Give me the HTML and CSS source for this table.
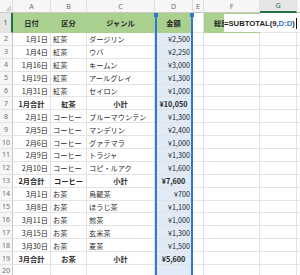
FILE: index.html
```html
<!DOCTYPE html>
<html lang="ja">
<head>
<meta charset="utf-8">
<link rel="stylesheet" href="styles.css">
</head>
<body>
<div class="sheet">
  <div class="grid">
    <div class="hd corner"><span class="tri"></span></div>
    <div class="hd">A</div><div class="hd">B</div><div class="hd">C</div><div class="hd">D</div><div class="hd">E</div><div class="hd">F</div><div class="hd act">G</div><div class="hd"></div>

    <div class="rh act">1</div>
    <div class="c g m b">日付</div><div class="c g m b">区分</div><div class="c g m b">ジャンル</div><div class="c g m b">金額</div><div class="c"></div><div class="c g b f1"><span class="clip">総計</span></div><div class="c"></div><div class="c"></div>

    <div class="rh">2</div><div class="c r">1月1日</div><div class="c">紅茶</div><div class="c">ダージリン</div><div class="c d r">¥2,500</div><div class="c"></div><div class="c"></div><div class="c"></div><div class="c"></div>
    <div class="rh">3</div><div class="c r">1月4日</div><div class="c">紅茶</div><div class="c">ウバ</div><div class="c d r">¥2,250</div><div class="c"></div><div class="c"></div><div class="c"></div><div class="c"></div>
    <div class="rh">4</div><div class="c r">1月16日</div><div class="c">紅茶</div><div class="c">キームン</div><div class="c d r">¥3,000</div><div class="c"></div><div class="c"></div><div class="c"></div><div class="c"></div>
    <div class="rh">5</div><div class="c r">1月19日</div><div class="c">紅茶</div><div class="c">アールグレイ</div><div class="c d r">¥1,300</div><div class="c"></div><div class="c"></div><div class="c"></div><div class="c"></div>
    <div class="rh">6</div><div class="c r">1月31日</div><div class="c">紅茶</div><div class="c">セイロン</div><div class="c d r">¥1,000</div><div class="c"></div><div class="c"></div><div class="c"></div><div class="c"></div>
    <div class="rh">7</div><div class="c m b">1月合計</div><div class="c m b">紅茶</div><div class="c m b">小計</div><div class="c d m b">¥10,050</div><div class="c"></div><div class="c"></div><div class="c"></div><div class="c"></div>
    <div class="rh">8</div><div class="c r">2月1日</div><div class="c">コーヒー</div><div class="c">ブルーマウンテン</div><div class="c d r">¥1,300</div><div class="c"></div><div class="c"></div><div class="c"></div><div class="c"></div>
    <div class="rh">9</div><div class="c r">2月5日</div><div class="c">コーヒー</div><div class="c">マンデリン</div><div class="c d r">¥2,400</div><div class="c"></div><div class="c"></div><div class="c"></div><div class="c"></div>
    <div class="rh">10</div><div class="c r">2月6日</div><div class="c">コーヒー</div><div class="c">グァテマラ</div><div class="c d r">¥1,000</div><div class="c"></div><div class="c"></div><div class="c"></div><div class="c"></div>
    <div class="rh">11</div><div class="c r">2月9日</div><div class="c">コーヒー</div><div class="c">トラジャ</div><div class="c d r">¥1,300</div><div class="c"></div><div class="c"></div><div class="c"></div><div class="c"></div>
    <div class="rh">12</div><div class="c r">2月10日</div><div class="c">コーヒー</div><div class="c">コピ・ルアク</div><div class="c d r">¥1,600</div><div class="c"></div><div class="c"></div><div class="c"></div><div class="c"></div>
    <div class="rh">13</div><div class="c m b">2月合計</div><div class="c m b">コーヒー</div><div class="c m b">小計</div><div class="c d m b">¥7,600</div><div class="c"></div><div class="c"></div><div class="c"></div><div class="c"></div>
    <div class="rh">14</div><div class="c r">3月1日</div><div class="c">お茶</div><div class="c">烏龍茶</div><div class="c d r">¥700</div><div class="c"></div><div class="c"></div><div class="c"></div><div class="c"></div>
    <div class="rh">15</div><div class="c r">3月8日</div><div class="c">お茶</div><div class="c">ほうじ茶</div><div class="c d r">¥1,100</div><div class="c"></div><div class="c"></div><div class="c"></div><div class="c"></div>
    <div class="rh">16</div><div class="c r">3月11日</div><div class="c">お茶</div><div class="c">煎茶</div><div class="c d r">¥1,000</div><div class="c"></div><div class="c"></div><div class="c"></div><div class="c"></div>
    <div class="rh">17</div><div class="c r">3月15日</div><div class="c">お茶</div><div class="c">玄米茶</div><div class="c d r">¥1,300</div><div class="c"></div><div class="c"></div><div class="c"></div><div class="c"></div>
    <div class="rh">18</div><div class="c r">3月30日</div><div class="c">お茶</div><div class="c">麦茶</div><div class="c d r">¥1,500</div><div class="c"></div><div class="c"></div><div class="c"></div><div class="c"></div>
    <div class="rh">19</div><div class="c m b">3月合計</div><div class="c m b">お茶</div><div class="c m b">小計</div><div class="c d m b">¥5,600</div><div class="c"></div><div class="c"></div><div class="c"></div><div class="c"></div>
    <div class="rh">20</div><div class="c"></div><div class="c"></div><div class="c"></div><div class="c d"></div><div class="c"></div><div class="c"></div><div class="c"></div><div class="c"></div>
  </div>
  <div class="refbox"><span class="hdl hl"></span><span class="hdl hr"></span></div>
  <div class="editor">=SUBTOTAL(9,<span class="ref">D:D</span>)<span class="caret"></span></div>
</div>
</body>
</html>
```
FILE: styles.css
```css
* { box-sizing: border-box; margin: 0; padding: 0; }
body {
  margin: 0;
  background: #fff;
  font-family: "Noto Sans CJK JP", "Noto Sans", sans-serif;
  color: #262626;
  overflow: hidden;
}
.sheet {
  position: relative;
  width: 300px;
  height: 275px;
  overflow: hidden;
}
.grid {
  display: grid;
  grid-template-columns: 13px 38px 36px 68px 38px 11px 56px 37px 20px;
  grid-template-rows: 13px 20px repeat(19, 12.9px);
}
.hd {
  background: #f6f6f6;
  color: #6e6e6e;
  font-family: "Noto Sans", sans-serif;
  font-size: 7px;
  display: flex;
  align-items: center;
  justify-content: center;
  border-right: 1px solid #dedede;
  border-bottom: 1px solid #c9c9c9;
}
.hd.act {
  background: #e6e6e6;
  color: #1e6b40;
  border-bottom: 2px solid #217346;
}
.corner { position: relative; }
.tri {
  position: absolute;
  right: 1px;
  bottom: 1px;
  width: 0;
  height: 0;
  border-left: 6px solid transparent;
  border-bottom: 6px solid #d2d2d2;
}
.rh {
  background: #f6f6f6;
  color: #6e6e6e;
  font-family: "Noto Sans", sans-serif;
  font-size: 7px;
  display: flex;
  align-items: center;
  justify-content: center;
  border-right: 1px solid #c9c9c9;
  border-bottom: 1px solid #e4e4e4;
}
.rh.act {
  background: #e6e6e6;
  color: #1e6b40;
  border-right: 2px solid #217346;
}
.c {
  border-right: 1px solid #e3e3e3;
  border-bottom: 1px solid #e3e3e3;
  font-size: 7.2px;
  display: flex;
  align-items: center;
  padding: 1px 2px 0 2px;
  white-space: nowrap;
  overflow: hidden;
}
.r { justify-content: flex-end; }
.m { justify-content: center; }
.b { font-weight: 700; }
.g {
  background: #a9d08e;
  border-color: #a9d08e;
}
.d { background: #e0ebf7; }
.f1 { padding-left: 10px; }
.clip {
  display: block;
  width: 10px;
  overflow: hidden;
  white-space: nowrap;
}
.refbox {
  position: absolute;
  left: 155px;
  top: 13px;
  width: 38px;
  bottom: 0;
  border-left: 2px solid #2f77d1;
  border-right: 2px solid #2f77d1;
}
.hdl {
  position: absolute;
  top: 0;
  width: 4px;
  height: 4px;
  background: #2f77d1;
}
.hl { left: -3px; }
.hr { right: -3px; }
.editor {
  position: absolute;
  left: 224px;
  top: 14px;
  width: 73px;
  height: 18px;
  background: #fff;
  display: flex;
  align-items: center;
  font-family: "Liberation Sans", Arial, sans-serif;
  font-weight: 700;
  font-size: 7.7px;
  color: #1f1f1f;
  white-space: nowrap;
}
.ref { color: #2f77d1; }
.caret {
  display: inline-block;
  width: 1px;
  height: 11px;
  background: #111;
  margin-left: 1px;
}
```
